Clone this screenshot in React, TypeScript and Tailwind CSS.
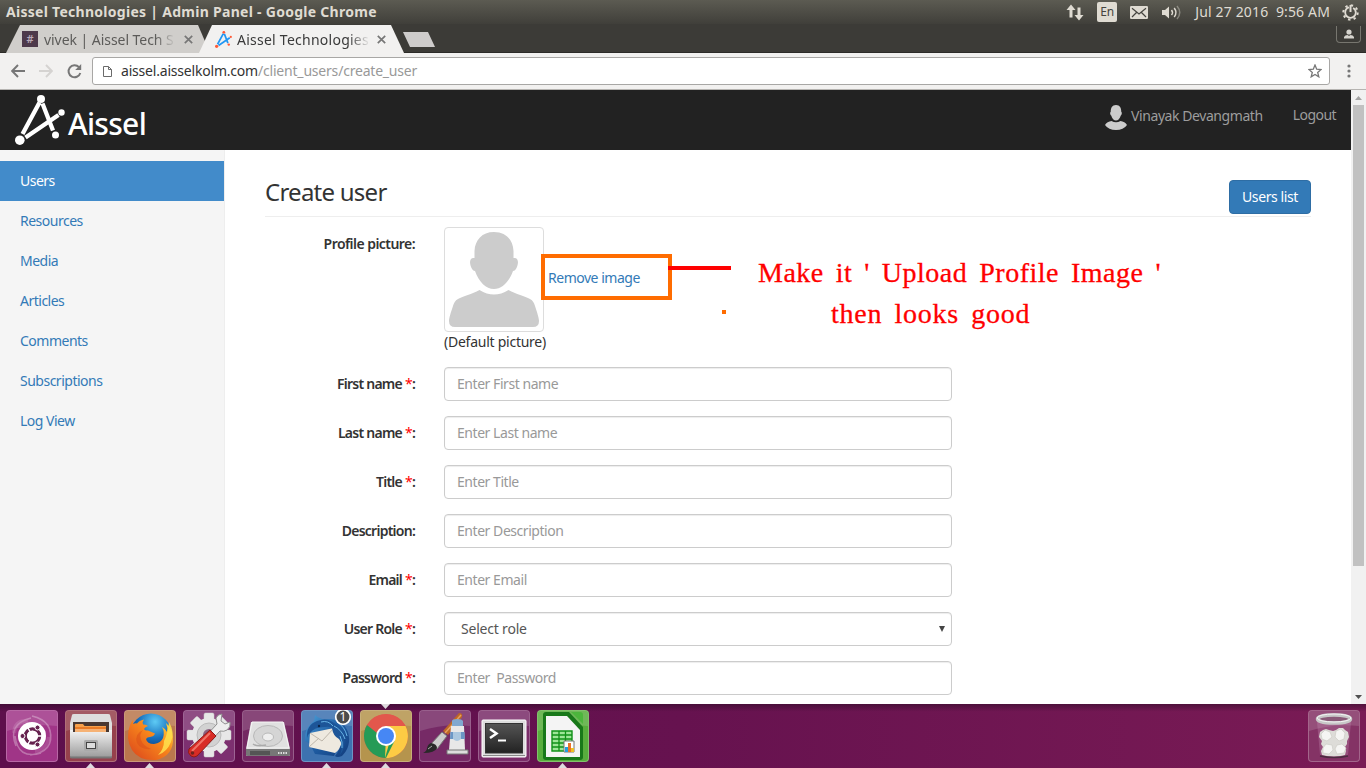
import type { ReactNode } from "react";

const navItems = ["Users", "Resources", "Media", "Articles", "Comments", "Subscriptions", "Log View"];

const fields: { label: string; required: boolean; text: string; select?: boolean }[] = [
  { label: "First name", required: true, text: "Enter First name" },
  { label: "Last name", required: true, text: "Enter Last name" },
  { label: "Title", required: true, text: "Enter Title" },
  { label: "Description", required: false, text: "Enter Description" },
  { label: "Email", required: true, text: "Enter Email" },
  { label: "User Role", required: true, text: "Select role", select: true },
  { label: "Password", required: true, text: "Enter  Password" },
];

function TitleBar() {
  return (
    <div className="flex h-6 items-center justify-between bg-gradient-to-b from-[#5c5b52] to-[#403f3a] pl-1.5 pr-[7px] text-[#dfdbd2]">
      <span className="whitespace-pre text-[14px] font-bold leading-6 tracking-[0.28px]">
        Aissel Technologies | Admin Panel - Google Chrome
      </span>
      <div className="flex items-center">
        <svg width="18" height="17" viewBox="0 0 18 17" fill="#dfdbd2" className="mr-[13px]">
          <path d="M5 .5 .5 6h3v7.500h3V6h3zM13 16.500 17.500 11h-3V3.500h-3V11h-3z" />
        </svg>
        <span className="mr-[13px] flex h-5 w-5 items-center justify-center rounded-[2px] bg-[#dfdbd2] text-[12px] leading-none text-[#45443f]">
          En
        </span>
        <svg width="18" height="13" viewBox="0 0 18 13" className="mr-[14px]">
          <rect width="18" height="13" rx="1.2" fill="#dfdbd2" />
          <path d="M2 2.300 9 8l7-5.700M2 11l4.500-4.500M16 11l-4.500-4.500" fill="none" stroke="#45443f" strokeWidth="1.200" />
        </svg>
        <svg width="20" height="15" viewBox="0 0 20 15" className="mr-[13px]" fill="none" stroke="#dfdbd2" strokeWidth="1.500">
          <path d="M0 5h3l4-3.500v12L3 10H0z" fill="#dfdbd2" stroke="none" />
          <path d="M9.500 5q2 2.500 0 5M12.200 3q3.500 4.500 0 9" />
          <path d="M15 1q5.500 6.500 0 13" opacity=".4" />
        </svg>
        <span className="mr-3 whitespace-pre text-[14px] leading-6 tracking-[0.15px]">Jul 27 2016  9:56 AM</span>
        <svg width="17" height="17" viewBox="0 0 17 17" fill="none" stroke="#dfdbd2">
          <circle cx="8.500" cy="8.500" r="5.300" strokeWidth="1.800" strokeDasharray="29 4.300" strokeDashoffset="-27.100" />
          <circle cx="8.500" cy="8.500" r="7.200" strokeWidth="2" strokeDasharray="2.400 3.255" />
          <path d="M8.500 1v7" strokeWidth="2" />
        </svg>
      </div>
    </div>
  );
}

function AisselMark({ small = false }: { small?: boolean }) {
  const line = small ? "#2196f3" : "#fff";
  const dot = small ? "#ff5a36" : "#fff";
  const size = small ? 17 : 50;
  return (
    <svg width={size} height={size} viewBox="0 0 50 50" stroke={line} strokeWidth={small ? 5 : 4.300} fill={dot} className="shrink-0">
      <path d="M24.500 7.500 7.500 39M27.500 8.500 38 35.500M43.500 20 10.500 42.500" fill="none" />
      <g stroke="none">
        <circle cx="26" cy="4" r="4" />
        <circle cx="46.500" cy="17.500" r="3.200" />
        <circle cx="40.500" cy="40" r="3.500" />
        <circle cx="4.800" cy="45.200" r="4.800" />
      </g>
    </svg>
  );
}

function CloseX() {
  return (
    <svg width="9" height="9" viewBox="0 0 9 9" stroke="#777" strokeWidth="1.700" className="shrink-0">
      <path d="m.8.8 7.400 7.400M8.200.8.8 8.200" />
    </svg>
  );
}

function TabStrip() {
  return (
    <div className="flex h-[29px] items-start border-b border-[#2c2b28] bg-[#3c3b37] pl-1.5">
      <div className="mt-px flex h-7 w-[204px] shrink-0 items-center bg-[#d0cecb] pl-4 [clip-path:polygon(14px_0,192px_0,204px_28px,0_28px)]">
        <span className="mr-1.5 flex size-4 items-center justify-center bg-[#4d394b] text-[11px] font-semibold text-[#b9a9b8]">#</span>
        <span className="w-[132px] overflow-hidden whitespace-nowrap text-[14px] tracking-[-0.05px] text-[#5c5b59] [mask-image:linear-gradient(to_right,#000_84%,transparent)]">
          vivek | Aissel Tech S
        </span>
        <span className="ml-[8px]"><CloseX /></span>
      </div>
      <div className="z-10 -ml-[11px] mt-px flex h-7 w-[205px] shrink-0 items-center bg-[#f2f1f0] pl-4 [clip-path:polygon(13px_0,192px_0,205px_28px,0_28px)]">
        <AisselMark small />
        <span className="ml-[5px] w-[133px] overflow-hidden whitespace-nowrap text-[14px] tracking-[0.25px] text-[#3a3a3a] [mask-image:linear-gradient(to_right,#000_84%,transparent)]">
          Aissel Technologies
        </span>
        <span className="ml-[7px]"><CloseX /></span>
      </div>
      <div className="-ml-px mt-2 h-[15px] w-8 bg-[#cecccb] [clip-path:polygon(0_0,25px_0,32px_15px,7px_15px)]" />
      <div className="ml-auto mr-[5px] mt-0.5 flex h-[17px] w-[25px] items-center justify-center rounded-b border border-t-0 border-[#77766f]">
        <svg width="10" height="10" viewBox="0 0 10 10" fill="#d5d3cd">
          <circle cx="5" cy="3" r="2.600" />
          <path d="M0 9.500V8q1-2 3.500-2L5 7l1.500-1Q9 6 10 8v1.500z" />
        </svg>
      </div>
    </div>
  );
}

function Toolbar() {
  return (
    <div className="flex h-[37px] items-center border-b border-[#b6b4b1] bg-[#f2f1f0] pl-[11px] pr-[15px]">
      <svg width="14" height="14" viewBox="0 0 14 14" fill="none" stroke="#777" strokeWidth="1.900">
        <path d="M14 7H1.500M7 1 1.200 7 7 13" />
      </svg>
      <svg width="14" height="14" viewBox="0 0 14 14" fill="none" stroke="#d5d3d1" strokeWidth="1.900" className="ml-[14px]">
        <path d="M0 7h12.500M7 1l5.800 6L7 13" />
      </svg>
      <svg width="15" height="15" viewBox="0 0 15 15" fill="none" stroke="#777" strokeWidth="2" className="ml-[14px]">
        <path d="M12 3.200A6 6 0 1 0 13.300 9" />
        <path d="M14.200 0v6H8.200z" fill="#777" stroke="none" />
      </svg>
      <div className="ml-2.5 flex h-7 flex-1 items-center rounded-[3px] border border-[#a8a7a5] bg-white pl-[10px] pr-[7px]">
        <svg width="9" height="11" viewBox="0 0 9 11" fill="none" stroke="#6b6b6b">
          <path d="M.5.5h5l3 3v7h-8zM5.500.5v3h3" />
        </svg>
        <span className="ml-[9px] flex-1 text-[14px] leading-5 tracking-[-0.2px] text-[#999]">
          <span className="text-[#333]">aissel.aisselkolm.com</span>/client_users/create_user
        </span>
        <svg width="14" height="14" viewBox="0 0 14 14" fill="none" stroke="#777" strokeWidth="1.300">
          <path d="m7 1 1.700 4.200 4.400.3-3.400 2.900 1.100 4.400L7 10.400l-3.800 2.400 1.100-4.400L.9 5.500l4.400-.3z" />
        </svg>
      </div>
      <svg width="4" height="14" viewBox="0 0 4 14" fill="#777" className="ml-[17px]">
        <circle cx="2" cy="2" r="1.600" />
        <circle cx="2" cy="7" r="1.600" />
        <circle cx="2" cy="12" r="1.600" />
      </svg>
    </div>
  );
}

function SiteHeader() {
  return (
    <header className="flex h-[60px] shrink-0 bg-[#222] pl-[15px] pr-[15px] text-[14px] text-[#9d9d9d]">
      <div className="flex items-start pt-[5px] text-white">
        <AisselMark />
        <span className="ml-[3px] mt-[8px] text-[30px] font-medium leading-[42px] tracking-[-0.7px]">Aissel</span>
      </div>
      <div className="ml-auto flex items-start">
        <svg width="22" height="25" viewBox="0 0 22 25" fill="#ccc" className="mt-[15px]">
          <path d="M11 0c4 0 5.300 3 5.300 7 1 0 .5 3-.5 3.500-.8 3-2.800 5-4.800 5s-4-2-4.800-5C5.200 10 4.700 7 5.700 7 5.700 3 7 0 11 0z" />
          <path d="M0 20c1-2.500 4-3.500 6.500-4q4.500 2.500 9 0c2.500.5 5.500 1.500 6.500 4q-3.500 5-11 5T0 20z" />
        </svg>
        <span className="ml-1 mt-4 leading-5 tracking-[-0.43px]">Vinayak Devangmath</span>
        <span className="ml-[30px] mt-[15px] leading-5 tracking-[-0.55px]">Logout</span>
      </div>
    </header>
  );
}

function Sidebar() {
  return (
    <nav className="w-[225px] shrink-0 border-r border-[#eee] bg-[#f5f5f5] pt-[11px] text-[14px] tracking-[-0.5px]">
      {navItems.map((item, i) => (
        <div
          key={item}
          className={
            i === 0
              ? "h-10 w-[224px] bg-[#428bca] pl-5 leading-10 text-white"
              : "h-10 pl-5 leading-10 text-[#337ab7]"
          }
        >
          {item}
        </div>
      ))}
    </nav>
  );
}

function ProfileRow() {
  return (
    <div className="mt-2.5 flex h-[140px]">
      <div className="w-[150px] pt-[7px] text-right font-semibold leading-5 tracking-[-0.55px]">Profile picture:</div>
      <div className="relative ml-[29px]">
        <div className="flex items-center">
          <div className="h-[105px] w-[100px] rounded border border-[#ddd] bg-white p-1">
            <svg width="90" height="95" viewBox="0 0 90 95" fill="#ccc">
              <path d="M45 0C57 0 64 8 64.500 19v7c5-1 5.500 5 3 10-1 2-2 3-3.500 3C60 50 53 57 45 57S30 50 26 39c-1.500 0-2.500-1-3.500-3-2.500-5-2-11 3-10v-7C26 8 33 0 45 0z" />
              <path d="M30.500 58q14.500 9 29 0C67 62 76 64.500 81 67c3 1.500 4 4 5 7 2 6 4 12 4 15q0 6-6 6H6q-6 0-6-6c0-3 2-9 4-15 1-3 2-5.500 5-7 5-2.500 14-5 21.500-9z" />
            </svg>
          </div>
          <span className="mb-1 ml-1 tracking-[-0.48px] text-[#337ab7]">Remove image</span>
        </div>
        <div className="leading-5 tracking-[-0.25px]">(Default picture)</div>
        <div className="absolute left-[97px] top-[27px] h-[46px] w-[131px] border-4 border-[#ff6c00]" />
        <div className="absolute left-[224px] top-[39px] h-1 w-[63px] bg-[#f00]" />
        <div className="absolute left-[278px] top-[83px] size-1 bg-[#ff6c00]" />
        <div className="absolute left-[314px] top-[25px] whitespace-pre font-['Liberation_Serif'] text-[28px] leading-[41px] tracking-[0.5px] text-[#f00] [-webkit-text-stroke:0.3px_#f00] [word-spacing:4.5px]">
          Make it ' Upload Profile Image '
          <div className="pl-[73px] tracking-[0.75px]">then looks good</div>
        </div>
      </div>
    </div>
  );
}

function CreateUserForm() {
  return (
    <main className="flex-1 pl-10 pt-[30px] text-[14px] text-[#333]">
      <div className="flex h-[37px] w-[1046px] justify-between border-b border-[#eee]">
        <h1 className="text-[24px] leading-[24px] tracking-[-0.75px]">Create user</h1>
        <button className="h-[34px] w-[82px] rounded border border-[#2e6da4] bg-[#337ab7] pb-0.5 tracking-[-0.4px] text-white">Users list</button>
      </div>
      <ProfileRow />
      {fields.map((f) => (
        <div key={f.label} className="mb-[15px] flex h-[34px] items-center">
          <label className="w-[150px] pb-0.5 text-right font-semibold tracking-[-0.75px]">
            {f.label}
            {f.required && <span className="font-normal text-[#f00]"> *</span>}:
          </label>
          <div
            className={
              f.select
                ? "ml-[29px] flex h-[34px] w-[508px] items-center justify-between whitespace-pre rounded border border-[#ccc] bg-white pb-0.5 pl-4 pr-1.5 tracking-[-0.2px] text-[#555] shadow-[inset_0_1px_1px_rgba(0,0,0,0.075)]"
                : "ml-[29px] flex h-[34px] w-[508px] items-center whitespace-pre rounded border border-[#ccc] bg-white px-3 pb-0.5 tracking-[-0.45px] text-[#999] shadow-[inset_0_1px_1px_rgba(0,0,0,0.075)]"
            }
          >
            {f.text}
            {f.select && (
              <svg width="6" height="6" viewBox="0 0 6 6" fill="#444" className="mt-0.5">
                <path d="M0 0h6L3 6z" />
              </svg>
            )}
          </div>
        </div>
      ))}
    </main>
  );
}

function Scrollbar() {
  return (
    <div className="flex w-[15px] shrink-0 flex-col items-center bg-[#f1f1f1]">
      <svg width="15" height="15" viewBox="0 0 15 15" fill="#a3a3a3"><path d="M4 10h7L7.500 6z" /></svg>
      <div className="h-[461px] w-[11px] bg-[#c1c1c1]" />
      <svg width="15" height="15" viewBox="0 0 15 15" fill="#505050" className="mt-auto"><path d="M4 6h7l-3.500 4z" /></svg>
    </div>
  );
}

function Tile({ color, children, running = false, focused = false }: { color: string; children: ReactNode; running?: boolean; focused?: boolean }) {
  return (
    <div className="relative size-[52px] shrink-0">
      <div className={"size-[52px] rounded-[4px] border border-white/25 " + color}>
        <svg width="52" height="52" viewBox="0 0 52 52" className="-ml-px -mt-px block">
          <path d="M1 4q0-3 3-3h44q3 0 3 3v12Q26 13 1 21z" fill="#fff" opacity=".14" />
          {children}
        </svg>
      </div>
      {running && <div className="absolute left-[21px] top-[53px] h-[5px] w-[9px] bg-[#dedbde] [clip-path:polygon(50%_0,100%_100%,0_100%)]" />}
      {focused && <div className="absolute -top-[6px] left-[21px] h-[5px] w-[9px] bg-[#dedbde] [clip-path:polygon(0_0,100%_0,50%_100%)]" />}
    </div>
  );
}

function Dock() {
  return (
    <footer className="flex h-16 items-start gap-[7px] bg-[linear-gradient(to_bottom,rgba(40,10,35,0.5),transparent_12%),linear-gradient(to_right,#5d0f4c,#66124f_50%,#7a1b55)] px-1.5 pt-1.5">
      <svg width="0" height="0" className="absolute">
        <defs>
          <linearGradient id="metal" x2="0" y2="1"><stop stopColor="#f4f4f4" /><stop offset="1" stopColor="#999" /></linearGradient>
          <radialGradient id="globe" cx=".6" cy=".2" r=".8"><stop stopColor="#5ecbf5" /><stop offset=".5" stopColor="#176fbd" /><stop offset="1" stopColor="#0b2d66" /></radialGradient>
          <linearGradient id="fox" x1="1" x2="0" y2="1"><stop stopColor="#ffe94a" /><stop offset=".4" stopColor="#f98a1c" /><stop offset="1" stopColor="#d9401c" /></linearGradient>
          <linearGradient id="screen" x2="0" y2="1"><stop stopColor="#555" /><stop offset="1" stopColor="#222" /></linearGradient>
          <linearGradient id="bird" x2="1" y2="1"><stop stopColor="#4fa3dc" /><stop offset=".5" stopColor="#1f5da3" /><stop offset="1" stopColor="#123c7c" /></linearGradient>
        </defs>
      </svg>

      <Tile color="bg-[#a03587]">
        <g fill="none" stroke="#fff" opacity=".3">
          <path d="M26 6q22 5 18 26M44 20q5 22-20 25M35 43Q12 50 9 26M10 36Q1 14 25 8" strokeWidth="1.500" />
          <path d="M8 23q1-13 14-12M43 27q-1 13-14 14" strokeWidth="4" opacity=".4" />
        </g>
        <circle cx="26" cy="26" r="14" fill="#fff" />
        <circle cx="26.500" cy="26" r="7.200" fill="none" stroke="#66224f" strokeWidth="3.200" />
        <path d="M26.500 26H36M26.500 26l-5-9M26.500 26l-5 9" stroke="#fff" strokeWidth="1.500" />
        <circle cx="26.500" cy="26" r="5.300" fill="#fff" />
        <g fill="#66224f" stroke="#fff" strokeWidth="1"><circle cx="16.500" cy="26" r="2.500" /><circle cx="31.500" cy="17.500" r="2.500" /><circle cx="31.500" cy="34.500" r="2.500" /></g>
      </Tile>

      <Tile color="bg-[#96414c]" running>
        <path d="M7 5q0-1 2-1h34q2 0 2 1l2 8v12H5V13z" fill="#dedede" />
        <path d="M8 12h36v12H8z" fill="#493831" />
        <path d="M10 15q0-1 1-1h7l1.500 2H41v8H10z" fill="#f7a14b" />
        <path d="M10 17h31v5H10z" fill="#e97c27" />
        <path d="M10 19h31v4H10z" fill="#f6b275" />
        <path d="M5 20h3v2h36v-2h3v26q0 2-2 2H7q-2 0-2-2z" fill="url(#metal)" />
        <rect x="19" y="30" width="14" height="11" rx="1.500" fill="#aaa" />
        <rect x="21.500" y="32.500" width="9" height="6" fill="#ddd" stroke="#444" strokeWidth="1" />
        <path d="M5 46.500h42v1q0 1-2 1H7q-2 0-2-1z" fill="#777" />
      </Tile>

      <Tile color="bg-[#ba774d]" running>
        <circle cx="27" cy="24" r="20.500" fill="url(#globe)" />
        <path d="M6 15q1-3 3-5v4q2-1 4-.500 2-3 7-4-2 2-1 5 3-.5 5 1.500-3 1-4 3 1 2 4 1.500l7 3q-1 3-5 3.500-3 0-4 2 1 5 8 5 7-1 9-6 2-6-1-11 4 2 5 5 1-4-1-9 6 5 7 14 1 19-17 23-17 1-24-10Q1 28 6 15z" fill="url(#fox)" />
        <path d="M45 12q6 10 2 20-4 10-13 13 6-6 6-14 4-8 5-19z" fill="#ffe04d" opacity=".85" />
        <path d="M19 20q-4 4-2 10t10 9q-10 1-14-6-3-9 6-13z" fill="#d94c18" opacity=".5" />
      </Tile>

      <Tile color="bg-[#7d3070]">
        <g fill="#e7e7e7" stroke="#cfcfcf" strokeWidth=".5">
          <rect x="21" y="3" width="10" height="44" rx="1.500" />
          <rect x="4" y="20" width="44" height="10" rx="1.500" />
          <rect x="21" y="3" width="10" height="44" rx="1.500" transform="rotate(45 26 25)" />
          <rect x="21" y="3" width="10" height="44" rx="1.500" transform="rotate(-45 26 25)" />
        </g>
        <circle cx="26" cy="25" r="17" fill="#e7e7e7" />
        <circle cx="26" cy="25" r="12" fill="#d2d2d2" stroke="#bbb" />
        <circle cx="26" cy="25" r="6" fill="#8b6380" />
        <path d="m34 14-1-6q2-4 6-4l-1 7 4 3 5-2q1 5-3 8-3 2-7 1L26 33l-5-5z" fill="#eee" stroke="#888" strokeWidth=".9" />
        <path d="m27 20 6 6-19 20q-3 2-6 0-4-3-2-7z" fill="#d82c25" stroke="#8e1917" />
        <path d="M27 23 9 41" stroke="#f07468" strokeWidth="2" />
        <circle cx="9.500" cy="43" r="1.800" fill="#70241e" />
      </Tile>

      <Tile color="bg-[#752963]">
        <path d="M9 12h33l6 27v6q0 1-2 1H6q-2 0-2-1v-6z" fill="#d9d9d9" />
        <path d="M10 12h31l6 26H5z" fill="#e0e0e0" stroke="#f5f5f5" />
        <path d="M4 39h44v6q0 1-2 1H6q-2 0-2-1z" fill="#777" />
        <path d="M8 41h20v4H8z" fill="#555" />
        <path d="M36 43h9" stroke="#ddd" strokeWidth="2" strokeDasharray="1.500 1" />
        <ellipse cx="26" cy="26" rx="14.500" ry="10.500" fill="#d5d5d5" stroke="#b8b8b8" />
        <ellipse cx="26" cy="27" rx="5.500" ry="4" fill="#eee" stroke="#b8b8b8" />
        <path d="M11 34q4 3 13 1" fill="none" stroke="#aaa" strokeWidth="1.500" />
      </Tile>

      <Tile color="bg-[#3d72b0]" running>
        <path d="M4 31q-1-13 9-20l1-6q5 5 13 4 15 0 20 13 4 14-6 24-5 2-7 0 5-6 5-13l-6 13-19-2-5-10z" fill="url(#bird)" />
        <path d="m9 23 24-5 8 13q-2 9-7 12L8 37z" fill="#eee9df" />
        <path d="m9 23 12 8 12-13M8 37l10-9" fill="none" stroke="#bdb6ab" />
        <path d="M6 28Q5 15 16 11q10-4 17 2 8 4 10 14 2 10-4 18 4-10-1-16-6-3-7-11-3-2-7-1-11 0-15 6-3 2-3 5z" fill="#1d5598" />
        <path d="M33 16q8 4 11 13M36 12q8 5 10 14M39 26q3 6 2 12M20 12q7-2 12 4" stroke="#67b4e6" fill="none" />
        <circle cx="18" cy="16" r="1.200" fill="#0d2448" />
        <circle cx="42" cy="7" r="7.300" fill="#4c4c4c" stroke="#fff" strokeWidth="1.700" />
        <text x="42" y="11.300" fill="#fff" fontSize="12" textAnchor="middle" className="font-['Noto_Sans']">1</text>
      </Tile>

      <Tile color="bg-[#b5944d]" running focused>
        <circle cx="26" cy="26" r="22" fill="#e2574c" />
        <path d="M26 26 6.950 15A22 22 0 0 0 26 48l9.500-16.500z" fill="#259b56" />
        <path d="M26 26 25 48A22 22 0 0 0 45.500 16H26z" fill="#fccb44" />
        <path d="m34.500 31-8.500 17h-1l4-14z" fill="#259b56" />
        <path d="M7 15 17.500 32 20 20z" fill="#259b56" />
        <path d="M7 15A22 22 0 0 1 45.500 16H26q-7 1-9 7z" fill="#e2574c" />
        <circle cx="26" cy="26" r="10" fill="#fff" />
        <circle cx="26" cy="26" r="8" fill="#4687f4" />
      </Tile>

      <Tile color="bg-[#762a66]">
        <path d="M40 3q4 0 3 4L29 25l-5-4z" fill="#bd6726" />
        <path d="m42 5-16 18" stroke="#e7a15e" strokeWidth="1.500" />
        <path d="m23 22 5 4-10 13-6-5z" fill="#ccc" stroke="#777" />
        <path d="M12 33q6 1 6 5-2 5-14 5 4-2 4-5 1-4 4-5z" fill="#292929" />
        <path d="m9 39 4-3" stroke="#aaa" />
        <path d="M33 11q0-2 5-2t6 2v6H33z" fill="#80a8cf" />
        <path d="M32 16h13l1 24H30z" fill="#e8e8e8" />
        <path d="M31.500 22h14l.4 7H31z" fill="#6b97c5" />
        <path d="M34 29q4 4 8 0v-7h-8z" fill="#abc7df" />
        <path d="M28 40h21v4H28z" fill="#ddd" stroke="#777" />
      </Tile>

      <Tile color="bg-[#7a2d69]">
        <rect x="4" y="10" width="44" height="37" rx="1" fill="#dedede" stroke="#fff" />
        <rect x="7.500" y="13.500" width="37" height="29.500" fill="url(#screen)" stroke="#333" />
        <path d="m12 19 6.500 4.500L12 28" fill="none" stroke="#fff" strokeWidth="2.500" />
        <path d="M20 30.500h8" stroke="#fff" strokeWidth="2" />
        <path d="M5 45.500h42" stroke="#888" />
      </Tile>

      <Tile color="bg-[#58ad3d]" running>
        <path d="M9 2h23l14 15v30q0 3-3 3H9q-3 0-3-3V5q0-3 3-3z" fill="#187819" />
        <path d="M34 2h9q3 0 3 3v9z" fill="#4cb53c" />
        <path d="M9 6h21l13 14v27H9z" fill="#f4f4f4" />
        <path d="M15 21h20v20H15z" fill="#9ee698" stroke="#119118" strokeWidth="1.400" />
        <path d="M15 25h20M15 29h20M15 33h20M15 37h20M22 21v20M28.500 21v20" stroke="#119118" strokeWidth="1.300" />
        <path d="M27 31h10v11H27z" fill="#fff" stroke="#777" />
        <path d="M28 37h3v5h-3z" fill="#249de0" /><path d="M31 33h3v9h-3z" fill="#e97328" /><path d="M34 38h3v4h-3z" fill="#efbf23" />
      </Tile>

      <div className="ml-auto">
        <Tile color="bg-[#843365]">
          <path d="m9 12 3 33q14 5 28 0l3-33z" fill="#c793b5" opacity=".3" />
          <path d="m12 22 3-2 3-1 3 1 4 1 3-1 3-2 4 0 2 2 3 2 1 5-2 4 0 3-2 3 1 4-1 4q-11 3-23 0l-1-4 2-4-2-3 1-3-3-4z" fill="#dddcd8" />
          <path d="m13 24 4-4 5 2 2 5-5 4-5-2zm15-3 5-2 4 4-1 6-5 2-4-4zM15 38l3-4 6 1 1 5-4 4-6-1zm12 1 2-4 5-1 4 4-2 5-7 1z" fill="#f5f5f3" stroke="#c9c7c1" strokeWidth=".6" />
          <path d="m12 46q14 3 28 0" fill="none" stroke="#4c2b40" strokeWidth="1.500" />
          <ellipse cx="26" cy="9" rx="16.500" ry="4" fill="#8a5a78" stroke="#c8c8c8" strokeWidth="3.500" />
          <ellipse cx="26" cy="8" rx="17" ry="4" fill="none" stroke="#f4f4f4" strokeWidth="1" />
        </Tile>
      </div>
    </footer>
  );
}

export default function App() {
  return (
    <div className="flex h-[768px] w-[1366px] flex-col overflow-hidden bg-white font-['Noto_Sans',sans-serif]">
      <TitleBar />
      <TabStrip />
      <Toolbar />
      <div className="flex h-[614px] shrink-0 overflow-hidden">
        <div className="flex w-[1351px] flex-col">
          <SiteHeader />
          <div className="flex min-h-0 flex-1">
            <Sidebar />
            <CreateUserForm />
          </div>
        </div>
        <Scrollbar />
      </div>
      <Dock />
    </div>
  );
}
